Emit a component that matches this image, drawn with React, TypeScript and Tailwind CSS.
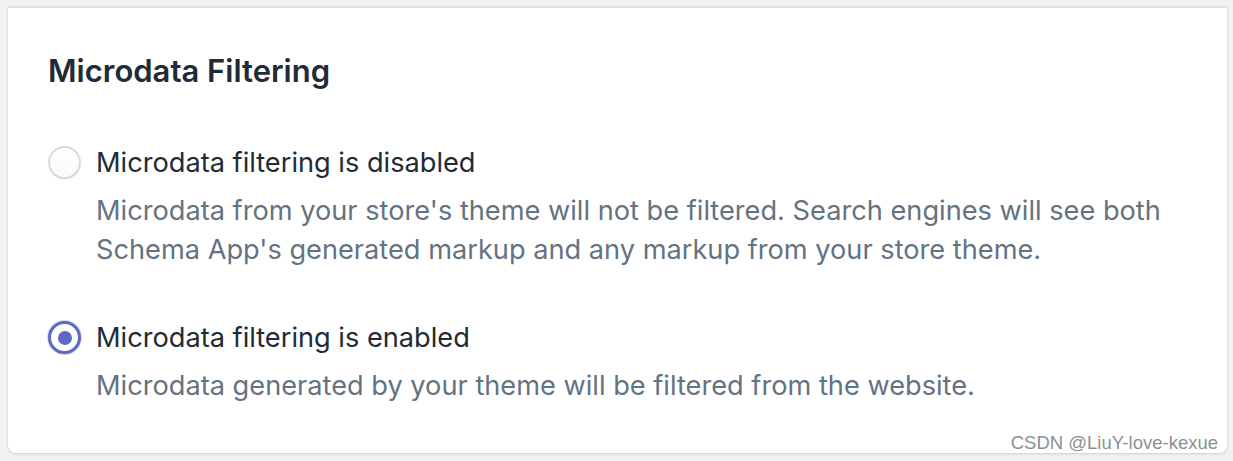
import React from "react";

type Option = {
  id: string;
  label: string;
  help: string;
  checked: boolean;
};

const options: Option[] = [
  {
    id: "disabled",
    label: "Microdata filtering is disabled",
    help: "Microdata from your store's theme will not be filtered. Search engines will see both Schema App's generated markup and any markup from your store theme.",
    checked: false,
  },
  {
    id: "enabled",
    label: "Microdata filtering is enabled",
    help: "Microdata generated by your theme will be filtered from the website.",
    checked: true,
  },
];

function Radio({ checked }: { checked: boolean }) {
  if (checked) {
    return (
      <span className="flex h-[33px] w-[33px] shrink-0 items-center justify-center rounded-full border-[3px] border-[#5c6ac4] bg-white shadow-[0_0_0_1px_rgba(92,106,196,0.25)]">
        <span className="block h-[14px] w-[14px] rounded-full bg-[#5c6ac4]" />
      </span>
    );
  }
  return (
    <span className="block h-[33px] w-[33px] shrink-0 rounded-full border-2 border-[#d6dbe1] bg-gradient-to-b from-white to-[#f9fafb] shadow-[0_1px_0_rgba(22,29,37,0.05)]" />
  );
}

export default function App() {
  return (
    <div
      className="relative h-[461px] w-[1233px] bg-[#f1f2f4] pl-[8px] pr-[6px] pt-[7px]"
      style={{ fontFamily: "Inter, 'Noto Sans', sans-serif" }}
    >
      <div className="h-[446px] rounded-b-[8px] border-t border-[#dcdfe3] bg-white px-[40px] pt-[43px] shadow-[0_0_0_1px_rgba(63,63,68,0.05),0_1px_3px_rgba(63,63,68,0.15)]">
        <h2 className="text-[31px] font-semibold leading-[40px] text-[#212b36]">
          Microdata Filtering
        </h2>
        <div className="mt-[53px] flex flex-col gap-[50px]">
          {options.map((o) => (
            <div key={o.id} className="flex gap-[15px]">
              <div className="pt-[2px]">
                <Radio checked={o.checked} />
              </div>
              <div className="max-w-[1095px]">
                <div className="text-[27.2px] leading-[38px] text-[#212b36]">
                  {o.label}
                </div>
                <div className="mt-[9px] text-[27.2px] leading-[39px] text-[#637381]">
                  {o.help}
                </div>
              </div>
            </div>
          ))}
        </div>
      </div>
      <div
        className="absolute bottom-[7px] right-[15px] text-[18.5px] leading-[22px] text-[#8f8f8f]"
        style={{ fontFamily: "'Liberation Sans', Arial, sans-serif" }}
      >
        CSDN @LiuY-love-kexue
      </div>
    </div>
  );
}
